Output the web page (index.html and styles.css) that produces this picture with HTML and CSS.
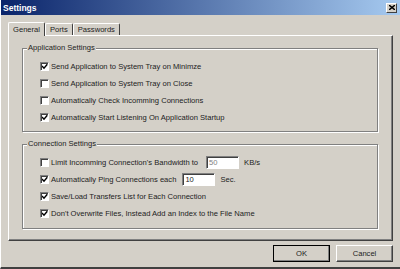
FILE: index.html
```html
<!DOCTYPE html>
<html lang="en">
<head>
  <meta charset="UTF-8" />
  <title>Settings</title>
  <link rel="stylesheet" href="styles.css">
</head>
<body>
  <div class="window">
    <div class="titlebar">
      <span class="title">Settings</span>
      <div class="close-btn">
        <svg width="6" height="5" viewBox="0 0 6 5"><path d="M0 0 L6 5 M6 0 L0 5" stroke="#000" stroke-width="1.4"/></svg>
      </div>
    </div>

    <div class="content">
      <div class="tabs">
        <div class="tab active">General</div>
        <div class="tab">Ports</div>
        <div class="tab">Passwords</div>
      </div>

      <div class="panel">
        <fieldset class="group">
          <legend>Application Settings</legend>
          <div class="row"><span class="check on"></span>Send Application to System Tray on Minimze</div>
          <div class="row"><span class="check"></span>Send Application to System Tray on Close</div>
          <div class="row"><span class="check"></span>Automatically Check Incomming Connections</div>
          <div class="row"><span class="check on"></span>Automatically Start Listening On Application Startup</div>
        </fieldset>

        <fieldset class="group second">
          <legend>Connection Settings</legend>
          <div class="row">
            <span class="check"></span>Limit Incomming Connection's Bandwidth to
            <input class="field field-bw" type="text" value="50" disabled>
            <span class="unit">KB/s</span>
          </div>
          <div class="row">
            <span class="check on"></span>Automatically Ping Connections each
            <input class="field field-ping" type="text" value="10">
            <span class="unit">Sec.</span>
          </div>
          <div class="row"><span class="check on"></span>Save/Load Transfers List for Each Connection</div>
          <div class="row"><span class="check on"></span>Don't Overwrite Files, Instead Add an Index to the File Name</div>
        </fieldset>
      </div>

      <div class="buttons">
        <button class="btn default">OK</button>
        <button class="btn">Cancel</button>
      </div>
    </div>
  </div>
</body>
</html>
```

FILE: styles.css
```css
body {
  margin: 0;
  background: #d4d0c8;
  font-family: 'Liberation Sans', Arial, sans-serif;
  font-size: 7.6px;
  color: #222;
}

.window {
  width: 400px;
  height: 269px;
  box-sizing: border-box;
  background: #d4d0c8;
  border-left: 1px solid #fff;
  border-bottom: 2px solid #404040;
  display: flex;
  flex-direction: column;
}

.titlebar {
  height: 15px;
  display: flex;
  align-items: center;
  justify-content: space-between;
  padding: 0 3px 0 2px;
  background: linear-gradient(to right, #0a246a, #a6caf0);
}

.title {
  color: white;
  font-weight: bold;
  font-size: 8.5px;
}

.close-btn {
  width: 11px;
  height: 10px;
  box-sizing: border-box;
  background: #d4d0c8;
  border: 1px solid;
  border-color: #fff #404040 #404040 #fff;
  display: flex;
  align-items: center;
  justify-content: center;
}

.content {
  flex: 1;
  padding: 7px 7px 0 7px;
}

.tabs {
  display: flex;
  align-items: flex-end;
  height: 13px;
}

.tab {
  height: 11px;
  line-height: 11px;
  padding: 0 4px;
  border: 1px solid;
  border-bottom: none;
  border-color: #fff #404040 #fff #fff;
  border-radius: 2px 2px 0 0;
}

.tab.active {
  height: 13px;
  line-height: 13px;
  padding: 0 4px;
  margin-bottom: -1px;
  position: relative;
  z-index: 1;
  background: #d4d0c8;
}

.panel {
  border: 1px solid;
  border-color: #fff #404040 #404040 #fff;
  box-shadow: inset -1px -1px 0 #808080;
  padding: 7px 14px 11px 13px;
}

.group {
  margin: 0;
  padding: 5px 10px 5px 17px;
  border: 1px solid #808080;
  box-shadow: 1px 1px 0 #fff, inset 1px 1px 0 #fff;
  min-width: 0;
}

.group.second {
  margin-top: 7px;
  padding-bottom: 6px;
}

.group legend {
  line-height: 10px;
  padding: 0 1px;
  margin-left: -13px;
  background: #d4d0c8;
}

.row {
  height: 17px;
  display: flex;
  align-items: center;
  white-space: nowrap;
}

.check {
  width: 9px;
  height: 9px;
  box-sizing: border-box;
  background: #fff;
  border: 1px solid;
  border-color: #808080 #fff #fff #808080;
  box-shadow: inset 1px 1px 0 #404040;
  margin-right: 2px;
  flex-shrink: 0;
}

.check.on {
  background: #fff url("data:image/svg+xml,%3Csvg xmlns='http://www.w3.org/2000/svg' width='7' height='7'%3E%3Cpath d='M1 3 L3 5.2 L6.3 1.3' fill='none' stroke='black' stroke-width='1.4'/%3E%3C/svg%3E") no-repeat 0 0;
}

.field {
  height: 13px;
  box-sizing: border-box;
  border: 1px solid;
  border-color: #808080 #fff #fff #808080;
  box-shadow: inset 1px 1px 0 #404040;
  background: #fff;
  font: inherit;
  padding: 0 2px;
  color: #222;
}

.field:disabled {
  color: #808080;
}

.field-bw {
  width: 33px;
  margin-left: 8px;
}

.field-ping {
  width: 33px;
  margin-left: 6px;
}

.unit {
  margin-left: 5px;
}

.buttons {
  display: flex;
  justify-content: flex-end;
  gap: 6px;
  margin-top: 4px;
}

.btn {
  width: 57px;
  height: 17px;
  box-sizing: border-box;
  background: #d4d0c8;
  border: 1px solid;
  border-color: #fff #404040 #404040 #fff;
  box-shadow: inset -1px -1px 0 #808080;
  font: inherit;
  color: #222;
  padding: 0;
}

.btn.default {
  outline: 1px solid #000;
  outline-offset: -1px;
}
```
